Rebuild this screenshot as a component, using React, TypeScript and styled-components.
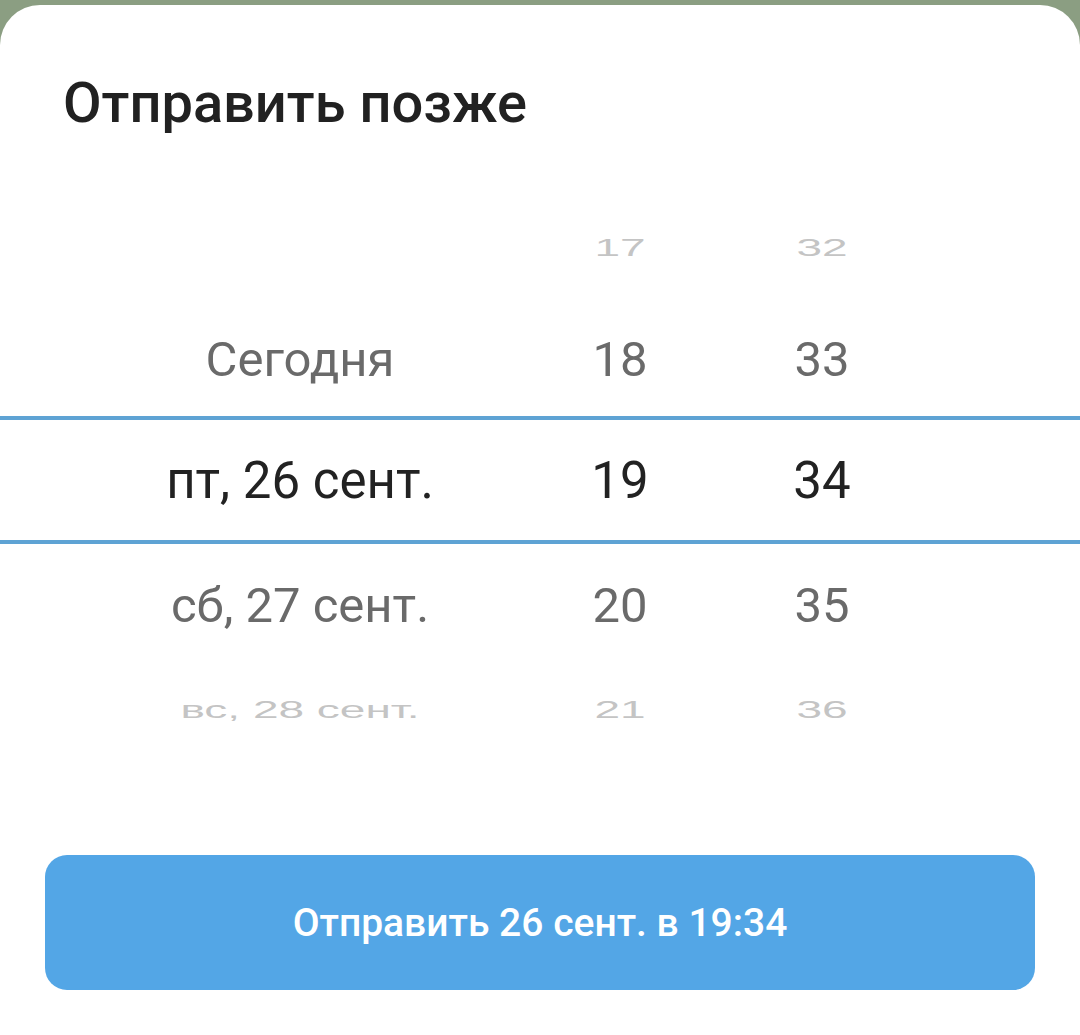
import React from "react";
import styled, { createGlobalStyle } from "styled-components";

type Variant = "far" | "near" | "selected";

type Row = {
  readonly day: string;
  readonly hour: string;
  readonly minute: string;
  readonly variant: Variant;
  readonly height: number;
};

const ROWS: Row[] = [
  { day: "", hour: "17", minute: "32", variant: "far", height: 110 },
  { day: "Сегодня", hour: "18", minute: "33", variant: "near", height: 113 },
  { day: "пт, 26 сент.", hour: "19", minute: "34", variant: "selected", height: 128 },
  { day: "сб, 27 сент.", hour: "20", minute: "35", variant: "near", height: 122 },
  { day: "вс, 28 сент.", hour: "21", minute: "36", variant: "far", height: 88 },
];

const FONT_SIZE: Record<Variant, number> = { far: 46, near: 49, selected: 51 };
const COLOR: Record<Variant, string> = {
  far: "#c4c4c4",
  near: "#6a6a6a",
  selected: "#222222",
};

export default function App() {
  return (
    <>
      <GlobalStyle />
      <Sheet>
        <Title>Отправить позже</Title>
        <Wheel>
          {ROWS.map((row) => (
            <WheelRow key={row.hour} $variant={row.variant} $height={row.height}>
              <Cell $variant={row.variant}>{row.day}</Cell>
              <Cell $variant={row.variant}>{row.hour}</Cell>
              <Cell $variant={row.variant}>{row.minute}</Cell>
            </WheelRow>
          ))}
        </Wheel>
        <SendButton>Отправить 26 сент. в 19:34</SendButton>
      </Sheet>
    </>
  );
}

const GlobalStyle = createGlobalStyle`
  html, body {
    margin: 0;
    padding: 0;
    background: #8b9e82;
    font-family: Roboto, "Noto Sans", sans-serif;
  }
`;

const Sheet = styled.div`
  margin-top: 5px;
  height: 1030px;
  background: #ffffff;
  border-radius: 40px 40px 0 0;
  display: flex;
  flex-direction: column;
  overflow: hidden;
`;

const Title = styled.h1`
  margin: 0;
  padding: 66px 0 0 63px;
  height: 131px;
  box-sizing: border-box;
  font-size: 56px;
  line-height: 64px;
  font-weight: 500;
  color: #212121;
`;

const Wheel = styled.div`
  margin-top: 57px;
  display: flex;
  flex-direction: column;
`;

const WheelRow = styled.div<{ $variant: Variant; $height: number }>`
  height: ${(p) => p.$height}px;
  box-sizing: border-box;
  display: grid;
  grid-template-columns: 540px 100px 304px;
  padding-left: 30px;
  align-items: center;
  border-top: ${(p) => (p.$variant === "selected" ? "4px solid #5ea3d4" : "none")};
  border-bottom: ${(p) => (p.$variant === "selected" ? "4px solid #5ea3d4" : "none")};
`;

const Cell = styled.div<{ $variant: Variant }>`
  text-align: center;
  white-space: nowrap;
  font-size: ${(p) => FONT_SIZE[p.$variant]}px;
  line-height: 1;
  color: ${(p) => COLOR[p.$variant]};
  transform: ${(p) => (p.$variant === "far" ? "scaleY(0.5)" : "none")};
  font-family: ${(p) =>
    p.$variant === "far" ? '"Liberation Sans", Arial, sans-serif' : "Roboto, sans-serif"};
`;

const SendButton = styled.button`
  margin: 101px 45px 0;
  height: 135px;
  border: none;
  border-radius: 22px;
  background: #53a6e6;
  color: #ffffff;
  font-family: Roboto, sans-serif;
  font-size: 39px;
  font-weight: 500;
  cursor: pointer;
`;
